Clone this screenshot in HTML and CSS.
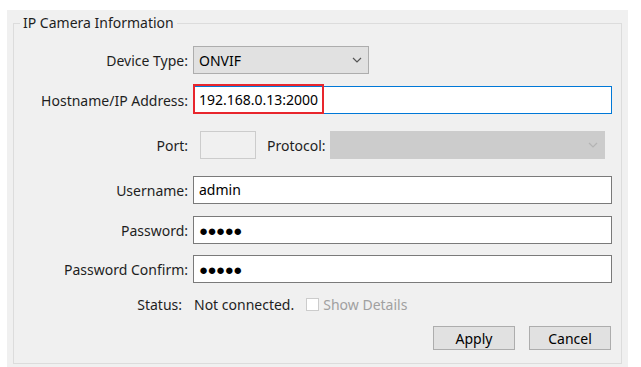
FILE: index.html
```html
<!DOCTYPE html>
<html lang="en">
<head>
    <meta charset="UTF-8">
    <title>IP Camera Information</title>
    <link rel="stylesheet" href="styles.css">
</head>
<body>
    <div class="panel">
        <fieldset class="group">
            <legend>IP Camera Information</legend>

            <div class="row first">
                <label class="label">Device Type:</label>
                <div class="select">
                    <span>ONVIF</span>
                    <svg class="chev" width="10" height="6" viewBox="0 0 10 6"><polyline points="1,1 5,5 9,1" fill="none" stroke="#555" stroke-width="1.2"/></svg>
                </div>
            </div>

            <div class="row host">
                <label class="label">Hostname/IP Address:</label>
                <div class="input focused">192.168.0.13:2000</div>
                <div class="highlight"></div>
            </div>

            <div class="row port">
                <label class="label">Port:</label>
                <div class="port-fields">
                    <div class="port-box"></div>
                    <span class="proto-label">Protocol:</span>
                    <div class="select disabled">
                        <svg class="chev" width="10" height="6" viewBox="0 0 10 6"><polyline points="1,1 5,5 9,1" fill="none" stroke="#b4b4b4" stroke-width="1.2"/></svg>
                    </div>
                </div>
            </div>

            <div class="row user">
                <label class="label">Username:</label>
                <div class="input">admin</div>
            </div>

            <div class="row pass">
                <label class="label">Password:</label>
                <div class="input dots">●●●●●</div>
            </div>

            <div class="row confirm">
                <label class="label">Password Confirm:</label>
                <div class="input dots">●●●●●</div>
            </div>

            <div class="row status">
                <span class="label status-label">Status:</span>
                <div class="status-value">
                    <span>Not connected.</span>
                    <span class="check"></span>
                    <span class="check-text">Show Details</span>
                </div>
            </div>

            <div class="buttons">
                <button class="btn">Apply</button>
                <button class="btn">Cancel</button>
            </div>
        </fieldset>
    </div>
</body>
</html>
```

FILE: styles.css
```css
body {
    margin: 0;
    background-color: #fff;
    font-family: "Noto Sans", "Open Sans", sans-serif;
    font-size: 14px;
    color: #1e1e1e;
}
.panel {
    margin: 10px 0 0 7px;
    width: 609px;
    height: 353px;
    padding: 4px 6px 0 6px;
    background-color: #f0f0f0;
}
.group {
    margin: 0;
    padding: 0;
    height: 350px;
    box-sizing: border-box;
    border: 1px solid #dcdcdc;
}
.group legend {
    margin-left: 6px;
    padding: 0 3px;
    line-height: 18px;
}
.row {
    position: relative;
    display: grid;
    grid-template-columns: 179px 419px;
    align-items: center;
    height: 28px;
    margin-top: 12px;
}
.row.first { margin-top: 14px; }
.row.port { margin-top: 17px; }
.row.user { margin-top: 17px; }
.row.confirm { margin-top: 11px; }
.row.status { margin-top: 10px; height: 22px; }
.label {
    text-align: right;
    padding-right: 5px;
    white-space: nowrap;
}
.input {
    box-sizing: border-box;
    height: 28px;
    background-color: #fff;
    border: 1px solid #7a7a7a;
    padding: 0 5px;
    line-height: 26px;
    color: #000;
}
.input.focused {
    border-color: #0078d7;
}
.input.dots {
    font-size: 15px;
    letter-spacing: -0.5px;
}
.highlight {
    position: absolute;
    left: 179px;
    top: -2px;
    width: 131px;
    height: 30px;
    box-sizing: border-box;
    border: 2px solid #e8262d;
}
.select {
    box-sizing: border-box;
    width: 176px;
    height: 28px;
    display: flex;
    align-items: center;
    justify-content: space-between;
    padding: 0 6px 0 5px;
    background-color: #e1e1e1;
    border: 1px solid #adadad;
    color: #000;
}
.select.disabled {
    width: 275px;
    background-color: #cccccc;
    border-color: #cccccc;
    justify-content: flex-end;
}
.port-fields {
    display: flex;
    align-items: center;
}
.port-box {
    width: 56px;
    height: 28px;
    box-sizing: border-box;
    margin-left: 7px;
    border: 1px solid #cccccc;
    background-color: #f0f0f0;
}
.proto-label {
    margin: 0 4px 0 11px;
}
.status-label {
    padding-right: 11px;
}
.status-value {
    display: flex;
    align-items: center;
    padding-left: 1px;
}
.check {
    width: 13px;
    height: 13px;
    box-sizing: border-box;
    margin: 0 4px 0 12px;
    border: 1px solid #cccccc;
    background-color: #fff;
}
.check-text {
    color: #a0a0a0;
}
.buttons {
    display: flex;
    justify-content: flex-end;
    gap: 14px;
    margin: 11px 10px 0 0;
}
.btn {
    width: 82px;
    height: 24px;
    padding: 0;
    font-family: inherit;
    font-size: 14px;
    color: #000;
    background-color: #e1e1e1;
    border: 1px solid #adadad;
}
```
